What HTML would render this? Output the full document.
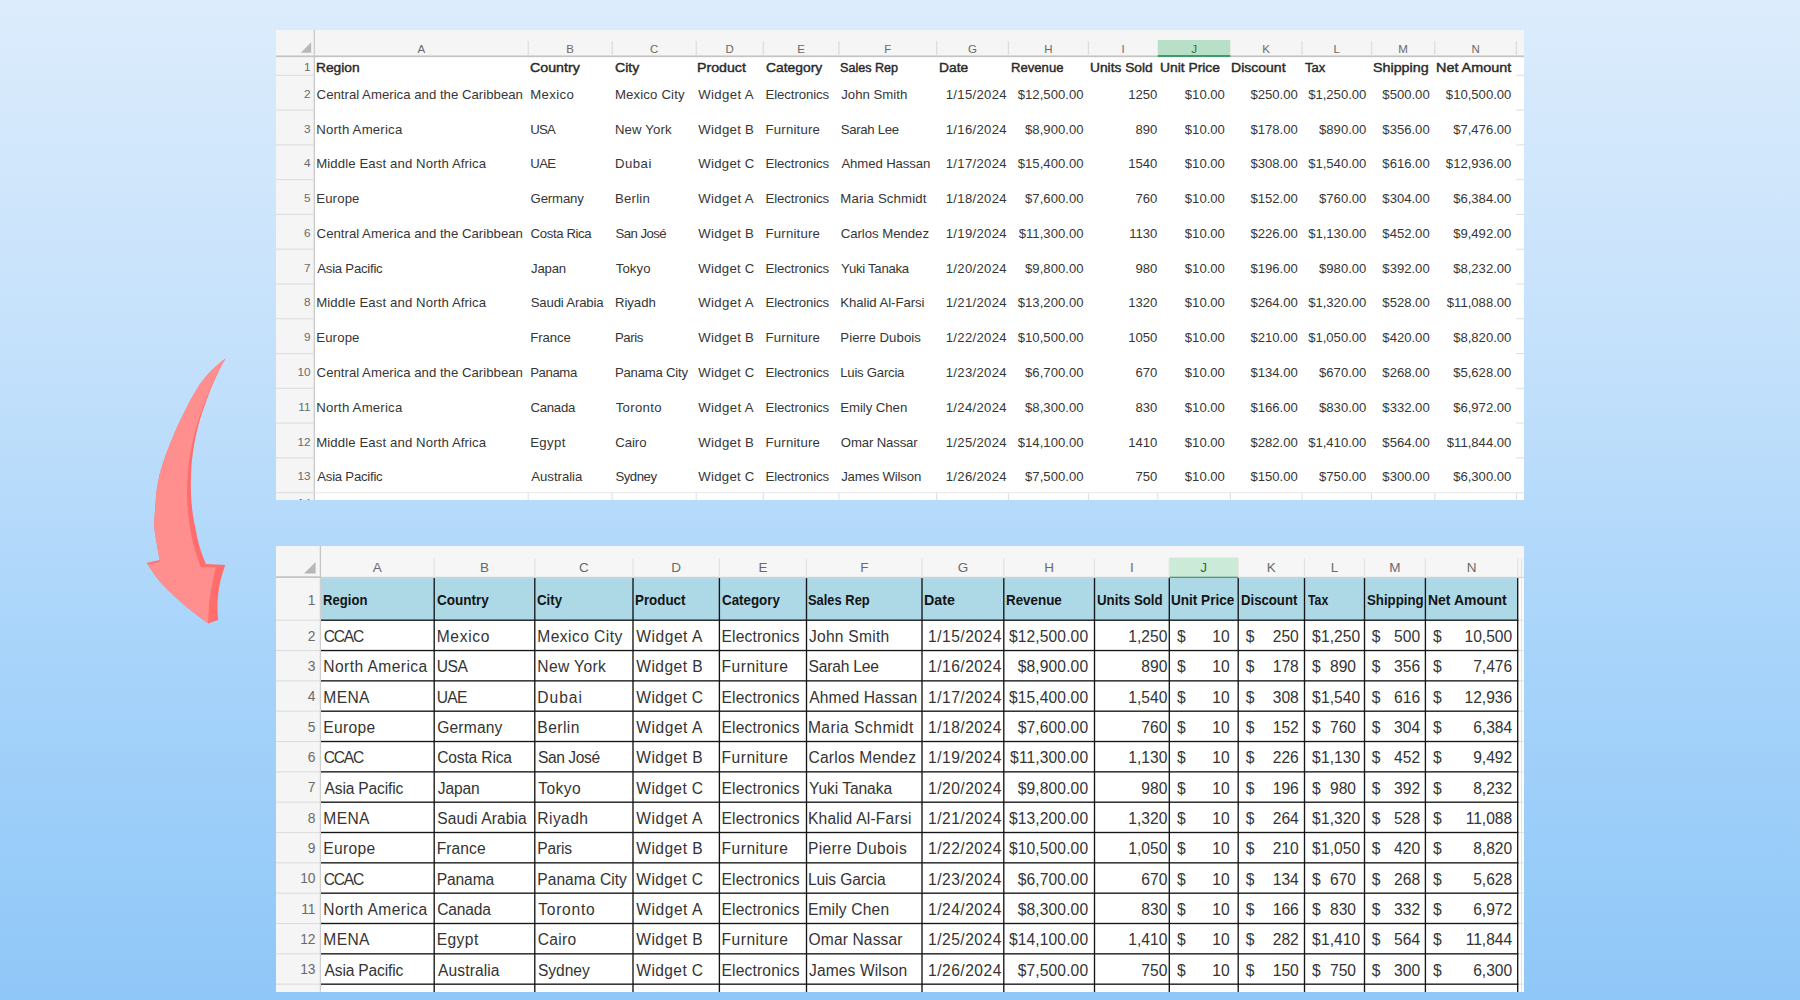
<!DOCTYPE html>
<html lang="en"><head><meta charset="utf-8"><title>Excel data cleanup: before and after</title>
<style>
html,body{margin:0;padding:0}
body{width:1800px;height:1000px;overflow:hidden;position:relative;font-family:"Liberation Sans",sans-serif;
background:linear-gradient(180deg,#dcecfc 0%,#c4e1fb 35%,#a8d4fa 65%,#8fc7f8 100%);}
.p{position:absolute;overflow:hidden;background:#fff}
.a{position:absolute;white-space:nowrap}
.l{position:absolute;background:#d4d4d4}
.c{position:absolute;white-space:nowrap;transform-origin:0 50%}
.r{text-align:right}
.rn{position:absolute;text-align:right;color:#6a6a6a;white-space:nowrap}
.cn{position:absolute;text-align:center;color:#6a6a6a;white-space:nowrap}
#t1 .c{font-size:13.2px;color:#363636;height:20px;line-height:20px}
#t1 .h{font-weight:400;color:#2a2a2a;font-size:13.3px;-webkit-text-stroke:0.42px #2a2a2a}
#t1 .n{font-size:13.1px}
#t2 .c{font-size:15.6px;color:#343434;height:24px;line-height:24px}
#t2 .h{font-weight:700;color:#141414;font-size:13.8px}
#t2 .n{font-size:15.6px}
</style></head><body>

<svg class="a" style="left:130px;top:345px" width="110" height="290" viewBox="130 345 110 290">
<path d="M225.4 358.4 C224.4 360.3 221.6 365.2 219.4 369.8 C217.2 374.4 214.4 380.3 212.0 386.0 C209.6 391.7 207.3 398.0 205.2 404.0 C203.1 410.0 200.9 416.0 199.2 422.0 C197.5 428.0 196.2 434.0 195.0 440.0 C193.8 446.0 192.9 452.0 192.2 458.0 C191.5 464.0 191.2 470.0 191.0 476.0 C190.8 482.0 190.8 488.0 191.0 494.0 C191.2 500.0 191.7 506.0 192.5 512.0 C193.3 518.0 194.8 525.0 195.8 530.0 C196.8 535.0 197.3 538.0 198.3 542.0 C199.3 546.0 200.7 550.3 202.0 554.0 C203.3 557.7 205.3 562.3 206.0 564.0 L225.3 565.1 C224.5 567.9 221.6 575.6 220.3 581.6 C219.0 587.6 218.0 595.0 217.6 601.4 C217.2 607.8 218.0 617.0 218.1 620.1 L208.2 623.4 C204.2 620.3 191.7 611.3 184.0 604.7 C176.3 598.1 168.2 590.8 162.0 583.8 C155.8 576.8 149.2 566.4 146.6 562.9 L159.8 560.0 C159.2 557.0 157.4 547.5 156.5 542.0 C155.6 536.5 154.6 532.6 154.4 527.0 C154.2 521.4 154.7 515.0 155.2 508.3 C155.7 501.6 156.0 493.9 157.2 486.7 C158.4 479.5 160.1 472.3 162.3 465.1 C164.5 457.9 167.3 450.7 170.2 443.5 C173.1 436.3 176.3 428.8 179.5 421.9 C182.7 415.0 186.0 408.5 189.4 402.2 C192.8 395.9 196.2 389.6 200.0 384.2 C203.8 378.8 208.0 374.1 212.2 369.8 C216.4 365.5 223.2 360.3 225.4 358.4 Z" fill="#ff6d6d"/>
<path d="M225.4 358.4 C224.3 360.4 221.3 365.8 218.9 370.5 C216.5 375.2 213.7 380.8 211.2 386.5 C208.7 392.2 206.3 398.6 204.1 404.5 C201.9 410.4 199.7 416.1 197.8 422.0 C196.0 427.9 194.4 434.0 193.0 440.0 C191.6 446.0 190.4 452.0 189.5 458.0 C188.6 464.0 188.0 470.0 187.6 476.0 C187.2 482.0 186.9 488.0 187.0 494.0 C187.1 500.0 187.4 506.0 188.0 512.0 C188.6 518.0 189.6 525.0 190.4 530.0 C191.2 535.0 191.8 537.8 192.8 542.0 C193.8 546.2 195.1 550.8 196.5 555.0 C197.9 559.2 200.2 565.2 201.0 567.3 L215.9 567.3 C215.3 569.7 213.7 575.7 212.6 581.6 C211.5 587.5 210.0 595.5 209.3 602.5 C208.6 609.5 208.4 619.9 208.2 623.4 C204.2 620.3 191.7 611.3 184.0 604.7 C176.3 598.1 168.1 590.5 162.0 583.8 C155.9 577.0 150.0 567.5 147.6 564.2 L159.9 561.8 C159.3 558.5 157.4 547.8 156.5 542.0 C155.6 536.2 154.6 532.6 154.4 527.0 C154.2 521.4 154.7 515.0 155.2 508.3 C155.7 501.6 156.0 493.9 157.2 486.7 C158.4 479.5 160.1 472.3 162.3 465.1 C164.5 457.9 167.3 450.7 170.2 443.5 C173.1 436.3 176.3 428.8 179.5 421.9 C182.7 415.0 186.0 408.5 189.4 402.2 C192.8 395.9 196.2 389.6 200.0 384.2 C203.8 378.8 208.0 374.1 212.2 369.8 C216.4 365.5 223.2 360.3 225.4 358.4 Z" fill="#ff8e8e"/>
</svg>
<div id="t1" class="p" style="left:276px;top:30px;width:1248px;height:470px">
<div class="a" style="left:0;top:0;width:1248px;height:26px;background:#f5f5f5"></div>
<div class="a" style="left:0;top:0;width:38px;height:470px;background:#f5f5f5"></div>
<svg class="a" style="left:0;top:0" width="1248" height="470" viewBox="0 0 1248 470">
<rect x="881.80" y="10" width="72.50" height="16" fill="#b8dfc7"/>
<rect x="0.00" y="25.45" width="1248.00" height="1.70" fill="#c4c4c4"/>
<rect x="881.80" y="25.00" width="72.50" height="2.00" fill="#3f9b68"/>
<rect x="37.70" y="0.00" width="1.20" height="470.00" fill="#c6c6c6"/>
<rect x="251.60" y="11.00" width="1.20" height="14.50" fill="#dcdcdc"/>
<rect x="335.60" y="11.00" width="1.20" height="14.50" fill="#dcdcdc"/>
<rect x="419.60" y="11.00" width="1.20" height="14.50" fill="#dcdcdc"/>
<rect x="486.70" y="11.00" width="1.20" height="14.50" fill="#dcdcdc"/>
<rect x="562.30" y="11.00" width="1.20" height="14.50" fill="#dcdcdc"/>
<rect x="660.10" y="11.00" width="1.20" height="14.50" fill="#dcdcdc"/>
<rect x="731.80" y="11.00" width="1.20" height="14.50" fill="#dcdcdc"/>
<rect x="811.80" y="11.00" width="1.20" height="14.50" fill="#dcdcdc"/>
<rect x="1025.40" y="11.00" width="1.20" height="14.50" fill="#dcdcdc"/>
<rect x="1094.90" y="11.00" width="1.20" height="14.50" fill="#dcdcdc"/>
<rect x="1158.20" y="11.00" width="1.20" height="14.50" fill="#dcdcdc"/>
<rect x="1239.80" y="11.00" width="1.20" height="14.50" fill="#dcdcdc"/>
<rect x="0.00" y="44.75" width="38.30" height="1.10" fill="#dddddd"/>
<rect x="1240.40" y="44.75" width="7.60" height="1.10" fill="#e0e0e0"/>
<rect x="0.00" y="79.53" width="38.30" height="1.10" fill="#dddddd"/>
<rect x="1240.40" y="79.53" width="7.60" height="1.10" fill="#e0e0e0"/>
<rect x="0.00" y="114.31" width="38.30" height="1.10" fill="#dddddd"/>
<rect x="1240.40" y="114.31" width="7.60" height="1.10" fill="#e0e0e0"/>
<rect x="0.00" y="149.09" width="38.30" height="1.10" fill="#dddddd"/>
<rect x="1240.40" y="149.09" width="7.60" height="1.10" fill="#e0e0e0"/>
<rect x="0.00" y="183.87" width="38.30" height="1.10" fill="#dddddd"/>
<rect x="1240.40" y="183.87" width="7.60" height="1.10" fill="#e0e0e0"/>
<rect x="0.00" y="218.65" width="38.30" height="1.10" fill="#dddddd"/>
<rect x="1240.40" y="218.65" width="7.60" height="1.10" fill="#e0e0e0"/>
<rect x="0.00" y="253.43" width="38.30" height="1.10" fill="#dddddd"/>
<rect x="1240.40" y="253.43" width="7.60" height="1.10" fill="#e0e0e0"/>
<rect x="0.00" y="288.21" width="38.30" height="1.10" fill="#dddddd"/>
<rect x="1240.40" y="288.21" width="7.60" height="1.10" fill="#e0e0e0"/>
<rect x="0.00" y="322.99" width="38.30" height="1.10" fill="#dddddd"/>
<rect x="1240.40" y="322.99" width="7.60" height="1.10" fill="#e0e0e0"/>
<rect x="0.00" y="357.77" width="38.30" height="1.10" fill="#dddddd"/>
<rect x="1240.40" y="357.77" width="7.60" height="1.10" fill="#e0e0e0"/>
<rect x="0.00" y="392.55" width="38.30" height="1.10" fill="#dddddd"/>
<rect x="1240.40" y="392.55" width="7.60" height="1.10" fill="#e0e0e0"/>
<rect x="0.00" y="427.33" width="38.30" height="1.10" fill="#dddddd"/>
<rect x="1240.40" y="427.33" width="7.60" height="1.10" fill="#e0e0e0"/>
<rect x="0.00" y="462.11" width="38.30" height="1.10" fill="#dddddd"/>
<rect x="1240.40" y="462.11" width="7.60" height="1.10" fill="#e0e0e0"/>
<rect x="0.00" y="496.89" width="38.30" height="1.10" fill="#dddddd"/>
<rect x="1240.40" y="496.89" width="7.60" height="1.10" fill="#e0e0e0"/>
<rect x="251.65" y="462.66" width="1.10" height="7.34" fill="#e0e0e0"/>
<rect x="335.65" y="462.66" width="1.10" height="7.34" fill="#e0e0e0"/>
<rect x="419.65" y="462.66" width="1.10" height="7.34" fill="#e0e0e0"/>
<rect x="486.75" y="462.66" width="1.10" height="7.34" fill="#e0e0e0"/>
<rect x="562.35" y="462.66" width="1.10" height="7.34" fill="#e0e0e0"/>
<rect x="660.15" y="462.66" width="1.10" height="7.34" fill="#e0e0e0"/>
<rect x="731.85" y="462.66" width="1.10" height="7.34" fill="#e0e0e0"/>
<rect x="811.85" y="462.66" width="1.10" height="7.34" fill="#e0e0e0"/>
<rect x="881.25" y="462.66" width="1.10" height="7.34" fill="#e0e0e0"/>
<rect x="953.75" y="462.66" width="1.10" height="7.34" fill="#e0e0e0"/>
<rect x="1025.45" y="462.66" width="1.10" height="7.34" fill="#e0e0e0"/>
<rect x="1094.95" y="462.66" width="1.10" height="7.34" fill="#e0e0e0"/>
<rect x="1158.25" y="462.66" width="1.10" height="7.34" fill="#e0e0e0"/>
<rect x="1239.85" y="462.66" width="1.10" height="7.34" fill="#e0e0e0"/>
<rect x="38.30" y="462.11" width="1209.70" height="1.10" fill="#e9e9e9"/>
<path d="M35.19999999999999 12.299999999999997 L35.19999999999999 22.799999999999997 L24.80000000000001 22.799999999999997 Z" fill="#b7b7b7"/>
</svg>
<div class="cn" style="left:38.3px;width:213.9px;top:11.5px;height:15px;line-height:15px;font-size:11.5px;color:#6a6a6a">A</div>
<div class="cn" style="left:252.2px;width:84.0px;top:11.5px;height:15px;line-height:15px;font-size:11.5px;color:#6a6a6a">B</div>
<div class="cn" style="left:336.2px;width:84.0px;top:11.5px;height:15px;line-height:15px;font-size:11.5px;color:#6a6a6a">C</div>
<div class="cn" style="left:420.2px;width:67.1px;top:11.5px;height:15px;line-height:15px;font-size:11.5px;color:#6a6a6a">D</div>
<div class="cn" style="left:487.3px;width:75.6px;top:11.5px;height:15px;line-height:15px;font-size:11.5px;color:#6a6a6a">E</div>
<div class="cn" style="left:562.9px;width:97.8px;top:11.5px;height:15px;line-height:15px;font-size:11.5px;color:#6a6a6a">F</div>
<div class="cn" style="left:660.7px;width:71.7px;top:11.5px;height:15px;line-height:15px;font-size:11.5px;color:#6a6a6a">G</div>
<div class="cn" style="left:732.4px;width:80.0px;top:11.5px;height:15px;line-height:15px;font-size:11.5px;color:#6a6a6a">H</div>
<div class="cn" style="left:812.4px;width:69.4px;top:11.5px;height:15px;line-height:15px;font-size:11.5px;color:#6a6a6a">I</div>
<div class="cn" style="left:881.8px;width:72.5px;top:11.5px;height:15px;line-height:15px;font-size:11.5px;color:#217346">J</div>
<div class="cn" style="left:954.3px;width:71.7px;top:11.5px;height:15px;line-height:15px;font-size:11.5px;color:#6a6a6a">K</div>
<div class="cn" style="left:1026.0px;width:69.5px;top:11.5px;height:15px;line-height:15px;font-size:11.5px;color:#6a6a6a">L</div>
<div class="cn" style="left:1095.5px;width:63.3px;top:11.5px;height:15px;line-height:15px;font-size:11.5px;color:#6a6a6a">M</div>
<div class="cn" style="left:1158.8px;width:81.6px;top:11.5px;height:15px;line-height:15px;font-size:11.5px;color:#6a6a6a">N</div>
<div class="rn" style="left:0;width:34.60000000000002px;top:27.4px;height:20px;line-height:20px;font-size:11.8px">1</div>
<div class="rn" style="left:0;width:34.60000000000002px;top:53.7px;height:20px;line-height:20px;font-size:11.8px">2</div>
<div class="rn" style="left:0;width:34.60000000000002px;top:88.5px;height:20px;line-height:20px;font-size:11.8px">3</div>
<div class="rn" style="left:0;width:34.60000000000002px;top:123.2px;height:20px;line-height:20px;font-size:11.8px">4</div>
<div class="rn" style="left:0;width:34.60000000000002px;top:158.0px;height:20px;line-height:20px;font-size:11.8px">5</div>
<div class="rn" style="left:0;width:34.60000000000002px;top:192.8px;height:20px;line-height:20px;font-size:11.8px">6</div>
<div class="rn" style="left:0;width:34.60000000000002px;top:227.6px;height:20px;line-height:20px;font-size:11.8px">7</div>
<div class="rn" style="left:0;width:34.60000000000002px;top:262.4px;height:20px;line-height:20px;font-size:11.8px">8</div>
<div class="rn" style="left:0;width:34.60000000000002px;top:297.1px;height:20px;line-height:20px;font-size:11.8px">9</div>
<div class="rn" style="left:0;width:34.60000000000002px;top:331.9px;height:20px;line-height:20px;font-size:11.8px">10</div>
<div class="rn" style="left:0;width:34.60000000000002px;top:366.7px;height:20px;line-height:20px;font-size:11.8px">11</div>
<div class="rn" style="left:0;width:34.60000000000002px;top:401.5px;height:20px;line-height:20px;font-size:11.8px">12</div>
<div class="rn" style="left:0;width:34.60000000000002px;top:436.3px;height:20px;line-height:20px;font-size:11.8px">13</div>
<div class="rn" style="left:0;width:34.60000000000002px;top:463.2px;height:20px;line-height:20px;font-size:11.8px">14</div>
<div class="c h" style="left:39.77px;top:27.6px;transform:scaleX(1.0353)">Region</div>
<div class="c h" style="left:254.18px;top:27.6px;transform:scaleX(1.0685)">Country</div>
<div class="c h" style="left:338.88px;top:27.6px;transform:scaleX(1.0586)">City</div>
<div class="c h" style="left:420.84px;top:27.6px;transform:scaleX(1.0664)">Product</div>
<div class="c h" style="left:489.60px;top:27.6px;transform:scaleX(1.0422)">Category</div>
<div class="c h" style="left:564.43px;top:27.6px;transform:scaleX(0.9471)">Sales Rep</div>
<div class="c h" style="left:663.07px;top:27.6px;transform:scaleX(1.0377)">Date</div>
<div class="c h" style="left:734.52px;top:27.6px;transform:scaleX(0.9856)">Revenue</div>
<div class="c h" style="left:813.84px;top:27.6px;transform:scaleX(1.0354)">Units Sold</div>
<div class="c h" style="left:884.23px;top:27.6px;transform:scaleX(1.0407)">Unit Price</div>
<div class="c h" style="left:955.25px;top:27.6px;transform:scaleX(1.0545)">Discount</div>
<div class="c h" style="left:1029.01px;top:27.6px;transform:scaleX(0.9827)">Tax</div>
<div class="c h" style="left:1097.35px;top:27.6px;transform:scaleX(1.0737)">Shipping</div>
<div class="c h" style="left:1160.42px;top:27.6px;transform:scaleX(1.0823)">Net Amount</div>
<div class="c" style="left:40.6px;top:54.7px;letter-spacing:0.010px">Central America and the Caribbean</div>
<div class="c" style="left:254.2px;top:54.7px;letter-spacing:0.373px">Mexico</div>
<div class="c" style="left:338.9px;top:54.7px;letter-spacing:0.156px">Mexico City</div>
<div class="c" style="left:422.3px;top:54.7px;letter-spacing:0.340px">Widget A</div>
<div class="c" style="left:489.6px;top:54.7px;letter-spacing:-0.104px">Electronics</div>
<div class="c" style="left:565.2px;top:54.7px;letter-spacing:0.010px">John Smith</div>
<div class="c r n" style="left:530.9px;width:200px;top:54.7px;letter-spacing:0.32px">1/15/2024</div>
<div class="c r n" style="left:607.7px;width:200px;top:54.7px;letter-spacing:0.05px">$12,500.00</div>
<div class="c r n" style="left:681.3px;width:200px;top:54.7px;letter-spacing:0px">1250</div>
<div class="c r n" style="left:748.9px;width:200px;top:54.7px;letter-spacing:0px">$10.00</div>
<div class="c r n" style="left:821.8px;width:200px;top:54.7px;letter-spacing:0px">$250.00</div>
<div class="c r n" style="left:890.4px;width:200px;top:54.7px;letter-spacing:0px">$1,250.00</div>
<div class="c r n" style="left:953.7px;width:200px;top:54.7px;letter-spacing:0px">$500.00</div>
<div class="c r n" style="left:1035.4px;width:200px;top:54.7px;letter-spacing:0px">$10,500.00</div>
<div class="c" style="left:40.2px;top:89.5px;letter-spacing:0.209px">North America</div>
<div class="c" style="left:254.3px;top:89.5px;letter-spacing:-0.786px">USA</div>
<div class="c" style="left:338.9px;top:89.5px;letter-spacing:0.131px">New York</div>
<div class="c" style="left:422.3px;top:89.5px;letter-spacing:0.293px">Widget B</div>
<div class="c" style="left:489.6px;top:89.5px;letter-spacing:0.188px">Furniture</div>
<div class="c" style="left:564.8px;top:89.5px;letter-spacing:-0.334px">Sarah Lee</div>
<div class="c r n" style="left:530.9px;width:200px;top:89.5px;letter-spacing:0.32px">1/16/2024</div>
<div class="c r n" style="left:607.7px;width:200px;top:89.5px;letter-spacing:0.05px">$8,900.00</div>
<div class="c r n" style="left:681.3px;width:200px;top:89.5px;letter-spacing:0px">890</div>
<div class="c r n" style="left:748.9px;width:200px;top:89.5px;letter-spacing:0px">$10.00</div>
<div class="c r n" style="left:821.8px;width:200px;top:89.5px;letter-spacing:0px">$178.00</div>
<div class="c r n" style="left:890.4px;width:200px;top:89.5px;letter-spacing:0px">$890.00</div>
<div class="c r n" style="left:953.7px;width:200px;top:89.5px;letter-spacing:0px">$356.00</div>
<div class="c r n" style="left:1035.4px;width:200px;top:89.5px;letter-spacing:0px">$7,476.00</div>
<div class="c" style="left:40.2px;top:124.2px;letter-spacing:0.105px">Middle East and North Africa</div>
<div class="c" style="left:254.3px;top:124.2px;letter-spacing:-0.665px">UAE</div>
<div class="c" style="left:338.9px;top:124.2px;letter-spacing:0.504px">Dubai</div>
<div class="c" style="left:422.3px;top:124.2px;letter-spacing:0.261px">Widget C</div>
<div class="c" style="left:489.6px;top:124.2px;letter-spacing:-0.104px">Electronics</div>
<div class="c" style="left:565.4px;top:124.2px;letter-spacing:-0.116px">Ahmed Hassan</div>
<div class="c r n" style="left:530.9px;width:200px;top:124.2px;letter-spacing:0.32px">1/17/2024</div>
<div class="c r n" style="left:607.7px;width:200px;top:124.2px;letter-spacing:0.05px">$15,400.00</div>
<div class="c r n" style="left:681.3px;width:200px;top:124.2px;letter-spacing:0px">1540</div>
<div class="c r n" style="left:748.9px;width:200px;top:124.2px;letter-spacing:0px">$10.00</div>
<div class="c r n" style="left:821.8px;width:200px;top:124.2px;letter-spacing:0px">$308.00</div>
<div class="c r n" style="left:890.4px;width:200px;top:124.2px;letter-spacing:0px">$1,540.00</div>
<div class="c r n" style="left:953.7px;width:200px;top:124.2px;letter-spacing:0px">$616.00</div>
<div class="c r n" style="left:1035.4px;width:200px;top:124.2px;letter-spacing:0px">$12,936.00</div>
<div class="c" style="left:40.2px;top:159.0px;letter-spacing:0.149px">Europe</div>
<div class="c" style="left:254.6px;top:159.0px;letter-spacing:-0.157px">Germany</div>
<div class="c" style="left:338.9px;top:159.0px;letter-spacing:0.245px">Berlin</div>
<div class="c" style="left:422.3px;top:159.0px;letter-spacing:0.340px">Widget A</div>
<div class="c" style="left:489.6px;top:159.0px;letter-spacing:-0.104px">Electronics</div>
<div class="c" style="left:564.3px;top:159.0px;letter-spacing:0.159px">Maria Schmidt</div>
<div class="c r n" style="left:530.9px;width:200px;top:159.0px;letter-spacing:0.32px">1/18/2024</div>
<div class="c r n" style="left:607.7px;width:200px;top:159.0px;letter-spacing:0.05px">$7,600.00</div>
<div class="c r n" style="left:681.3px;width:200px;top:159.0px;letter-spacing:0px">760</div>
<div class="c r n" style="left:748.9px;width:200px;top:159.0px;letter-spacing:0px">$10.00</div>
<div class="c r n" style="left:821.8px;width:200px;top:159.0px;letter-spacing:0px">$152.00</div>
<div class="c r n" style="left:890.4px;width:200px;top:159.0px;letter-spacing:0px">$760.00</div>
<div class="c r n" style="left:953.7px;width:200px;top:159.0px;letter-spacing:0px">$304.00</div>
<div class="c r n" style="left:1035.4px;width:200px;top:159.0px;letter-spacing:0px">$6,384.00</div>
<div class="c" style="left:40.6px;top:193.8px;letter-spacing:0.010px">Central America and the Caribbean</div>
<div class="c" style="left:254.6px;top:193.8px;letter-spacing:-0.381px">Costa Rica</div>
<div class="c" style="left:339.4px;top:193.8px;letter-spacing:-0.528px">San José</div>
<div class="c" style="left:422.3px;top:193.8px;letter-spacing:0.293px">Widget B</div>
<div class="c" style="left:489.6px;top:193.8px;letter-spacing:0.188px">Furniture</div>
<div class="c" style="left:564.7px;top:193.8px;letter-spacing:-0.030px">Carlos Mendez</div>
<div class="c r n" style="left:530.9px;width:200px;top:193.8px;letter-spacing:0.32px">1/19/2024</div>
<div class="c r n" style="left:607.7px;width:200px;top:193.8px;letter-spacing:0.05px">$11,300.00</div>
<div class="c r n" style="left:681.3px;width:200px;top:193.8px;letter-spacing:0px">1130</div>
<div class="c r n" style="left:748.9px;width:200px;top:193.8px;letter-spacing:0px">$10.00</div>
<div class="c r n" style="left:821.8px;width:200px;top:193.8px;letter-spacing:0px">$226.00</div>
<div class="c r n" style="left:890.4px;width:200px;top:193.8px;letter-spacing:0px">$1,130.00</div>
<div class="c r n" style="left:953.7px;width:200px;top:193.8px;letter-spacing:0px">$452.00</div>
<div class="c r n" style="left:1035.4px;width:200px;top:193.8px;letter-spacing:0px">$9,492.00</div>
<div class="c" style="left:41.3px;top:228.6px;letter-spacing:-0.253px">Asia Pacific</div>
<div class="c" style="left:255.1px;top:228.6px;letter-spacing:-0.217px">Japan</div>
<div class="c" style="left:339.7px;top:228.6px;letter-spacing:0.101px">Tokyo</div>
<div class="c" style="left:422.3px;top:228.6px;letter-spacing:0.261px">Widget C</div>
<div class="c" style="left:489.6px;top:228.6px;letter-spacing:-0.104px">Electronics</div>
<div class="c" style="left:565.1px;top:228.6px;letter-spacing:-0.282px">Yuki Tanaka</div>
<div class="c r n" style="left:530.9px;width:200px;top:228.6px;letter-spacing:0.32px">1/20/2024</div>
<div class="c r n" style="left:607.7px;width:200px;top:228.6px;letter-spacing:0.05px">$9,800.00</div>
<div class="c r n" style="left:681.3px;width:200px;top:228.6px;letter-spacing:0px">980</div>
<div class="c r n" style="left:748.9px;width:200px;top:228.6px;letter-spacing:0px">$10.00</div>
<div class="c r n" style="left:821.8px;width:200px;top:228.6px;letter-spacing:0px">$196.00</div>
<div class="c r n" style="left:890.4px;width:200px;top:228.6px;letter-spacing:0px">$980.00</div>
<div class="c r n" style="left:953.7px;width:200px;top:228.6px;letter-spacing:0px">$392.00</div>
<div class="c r n" style="left:1035.4px;width:200px;top:228.6px;letter-spacing:0px">$8,232.00</div>
<div class="c" style="left:40.2px;top:263.4px;letter-spacing:0.105px">Middle East and North Africa</div>
<div class="c" style="left:254.7px;top:263.4px;letter-spacing:-0.174px">Saudi Arabia</div>
<div class="c" style="left:338.9px;top:263.4px;letter-spacing:-0.022px">Riyadh</div>
<div class="c" style="left:422.3px;top:263.4px;letter-spacing:0.340px">Widget A</div>
<div class="c" style="left:489.6px;top:263.4px;letter-spacing:-0.104px">Electronics</div>
<div class="c" style="left:564.3px;top:263.4px;letter-spacing:-0.055px">Khalid Al-Farsi</div>
<div class="c r n" style="left:530.9px;width:200px;top:263.4px;letter-spacing:0.32px">1/21/2024</div>
<div class="c r n" style="left:607.7px;width:200px;top:263.4px;letter-spacing:0.05px">$13,200.00</div>
<div class="c r n" style="left:681.3px;width:200px;top:263.4px;letter-spacing:0px">1320</div>
<div class="c r n" style="left:748.9px;width:200px;top:263.4px;letter-spacing:0px">$10.00</div>
<div class="c r n" style="left:821.8px;width:200px;top:263.4px;letter-spacing:0px">$264.00</div>
<div class="c r n" style="left:890.4px;width:200px;top:263.4px;letter-spacing:0px">$1,320.00</div>
<div class="c r n" style="left:953.7px;width:200px;top:263.4px;letter-spacing:0px">$528.00</div>
<div class="c r n" style="left:1035.4px;width:200px;top:263.4px;letter-spacing:0px">$11,088.00</div>
<div class="c" style="left:40.2px;top:298.1px;letter-spacing:0.149px">Europe</div>
<div class="c" style="left:254.2px;top:298.1px;letter-spacing:-0.075px">France</div>
<div class="c" style="left:338.9px;top:298.1px;letter-spacing:-0.371px">Paris</div>
<div class="c" style="left:422.3px;top:298.1px;letter-spacing:0.293px">Widget B</div>
<div class="c" style="left:489.6px;top:298.1px;letter-spacing:0.188px">Furniture</div>
<div class="c" style="left:564.3px;top:298.1px;letter-spacing:0.056px">Pierre Dubois</div>
<div class="c r n" style="left:530.9px;width:200px;top:298.1px;letter-spacing:0.32px">1/22/2024</div>
<div class="c r n" style="left:607.7px;width:200px;top:298.1px;letter-spacing:0.05px">$10,500.00</div>
<div class="c r n" style="left:681.3px;width:200px;top:298.1px;letter-spacing:0px">1050</div>
<div class="c r n" style="left:748.9px;width:200px;top:298.1px;letter-spacing:0px">$10.00</div>
<div class="c r n" style="left:821.8px;width:200px;top:298.1px;letter-spacing:0px">$210.00</div>
<div class="c r n" style="left:890.4px;width:200px;top:298.1px;letter-spacing:0px">$1,050.00</div>
<div class="c r n" style="left:953.7px;width:200px;top:298.1px;letter-spacing:0px">$420.00</div>
<div class="c r n" style="left:1035.4px;width:200px;top:298.1px;letter-spacing:0px">$8,820.00</div>
<div class="c" style="left:40.6px;top:332.9px;letter-spacing:0.010px">Central America and the Caribbean</div>
<div class="c" style="left:254.2px;top:332.9px;letter-spacing:-0.407px">Panama</div>
<div class="c" style="left:338.9px;top:332.9px;letter-spacing:-0.238px">Panama City</div>
<div class="c" style="left:422.3px;top:332.9px;letter-spacing:0.261px">Widget C</div>
<div class="c" style="left:489.6px;top:332.9px;letter-spacing:-0.104px">Electronics</div>
<div class="c" style="left:564.3px;top:332.9px;letter-spacing:-0.261px">Luis Garcia</div>
<div class="c r n" style="left:530.9px;width:200px;top:332.9px;letter-spacing:0.32px">1/23/2024</div>
<div class="c r n" style="left:607.7px;width:200px;top:332.9px;letter-spacing:0.05px">$6,700.00</div>
<div class="c r n" style="left:681.3px;width:200px;top:332.9px;letter-spacing:0px">670</div>
<div class="c r n" style="left:748.9px;width:200px;top:332.9px;letter-spacing:0px">$10.00</div>
<div class="c r n" style="left:821.8px;width:200px;top:332.9px;letter-spacing:0px">$134.00</div>
<div class="c r n" style="left:890.4px;width:200px;top:332.9px;letter-spacing:0px">$670.00</div>
<div class="c r n" style="left:953.7px;width:200px;top:332.9px;letter-spacing:0px">$268.00</div>
<div class="c r n" style="left:1035.4px;width:200px;top:332.9px;letter-spacing:0px">$5,628.00</div>
<div class="c" style="left:40.2px;top:367.7px;letter-spacing:0.209px">North America</div>
<div class="c" style="left:254.6px;top:367.7px;letter-spacing:-0.305px">Canada</div>
<div class="c" style="left:339.7px;top:367.7px;letter-spacing:0.311px">Toronto</div>
<div class="c" style="left:422.3px;top:367.7px;letter-spacing:0.340px">Widget A</div>
<div class="c" style="left:489.6px;top:367.7px;letter-spacing:-0.104px">Electronics</div>
<div class="c" style="left:564.3px;top:367.7px;letter-spacing:-0.054px">Emily Chen</div>
<div class="c r n" style="left:530.9px;width:200px;top:367.7px;letter-spacing:0.32px">1/24/2024</div>
<div class="c r n" style="left:607.7px;width:200px;top:367.7px;letter-spacing:0.05px">$8,300.00</div>
<div class="c r n" style="left:681.3px;width:200px;top:367.7px;letter-spacing:0px">830</div>
<div class="c r n" style="left:748.9px;width:200px;top:367.7px;letter-spacing:0px">$10.00</div>
<div class="c r n" style="left:821.8px;width:200px;top:367.7px;letter-spacing:0px">$166.00</div>
<div class="c r n" style="left:890.4px;width:200px;top:367.7px;letter-spacing:0px">$830.00</div>
<div class="c r n" style="left:953.7px;width:200px;top:367.7px;letter-spacing:0px">$332.00</div>
<div class="c r n" style="left:1035.4px;width:200px;top:367.7px;letter-spacing:0px">$6,972.00</div>
<div class="c" style="left:40.2px;top:402.5px;letter-spacing:0.105px">Middle East and North Africa</div>
<div class="c" style="left:254.2px;top:402.5px;letter-spacing:0.364px">Egypt</div>
<div class="c" style="left:339.3px;top:402.5px;letter-spacing:-0.072px">Cairo</div>
<div class="c" style="left:422.3px;top:402.5px;letter-spacing:0.293px">Widget B</div>
<div class="c" style="left:489.6px;top:402.5px;letter-spacing:0.188px">Furniture</div>
<div class="c" style="left:564.8px;top:402.5px;letter-spacing:-0.156px">Omar Nassar</div>
<div class="c r n" style="left:530.9px;width:200px;top:402.5px;letter-spacing:0.32px">1/25/2024</div>
<div class="c r n" style="left:607.7px;width:200px;top:402.5px;letter-spacing:0.05px">$14,100.00</div>
<div class="c r n" style="left:681.3px;width:200px;top:402.5px;letter-spacing:0px">1410</div>
<div class="c r n" style="left:748.9px;width:200px;top:402.5px;letter-spacing:0px">$10.00</div>
<div class="c r n" style="left:821.8px;width:200px;top:402.5px;letter-spacing:0px">$282.00</div>
<div class="c r n" style="left:890.4px;width:200px;top:402.5px;letter-spacing:0px">$1,410.00</div>
<div class="c r n" style="left:953.7px;width:200px;top:402.5px;letter-spacing:0px">$564.00</div>
<div class="c r n" style="left:1035.4px;width:200px;top:402.5px;letter-spacing:0px">$11,844.00</div>
<div class="c" style="left:41.3px;top:437.3px;letter-spacing:-0.253px">Asia Pacific</div>
<div class="c" style="left:255.3px;top:437.3px;letter-spacing:-0.035px">Australia</div>
<div class="c" style="left:339.4px;top:437.3px;letter-spacing:-0.472px">Sydney</div>
<div class="c" style="left:422.3px;top:437.3px;letter-spacing:0.261px">Widget C</div>
<div class="c" style="left:489.6px;top:437.3px;letter-spacing:-0.104px">Electronics</div>
<div class="c" style="left:565.2px;top:437.3px;letter-spacing:-0.183px">James Wilson</div>
<div class="c r n" style="left:530.9px;width:200px;top:437.3px;letter-spacing:0.32px">1/26/2024</div>
<div class="c r n" style="left:607.7px;width:200px;top:437.3px;letter-spacing:0.05px">$7,500.00</div>
<div class="c r n" style="left:681.3px;width:200px;top:437.3px;letter-spacing:0px">750</div>
<div class="c r n" style="left:748.9px;width:200px;top:437.3px;letter-spacing:0px">$10.00</div>
<div class="c r n" style="left:821.8px;width:200px;top:437.3px;letter-spacing:0px">$150.00</div>
<div class="c r n" style="left:890.4px;width:200px;top:437.3px;letter-spacing:0px">$750.00</div>
<div class="c r n" style="left:953.7px;width:200px;top:437.3px;letter-spacing:0px">$300.00</div>
<div class="c r n" style="left:1035.4px;width:200px;top:437.3px;letter-spacing:0px">$6,300.00</div>
</div>

<div id="t2" class="p" style="left:276px;top:545.5px;width:1248px;height:446px">
<div class="a" style="left:0;top:0;width:1248px;height:32.5px;background:#f6f6f6"></div>
<div class="a" style="left:0;top:0;width:44px;height:446px;background:#f5f5f5"></div>
<svg class="a" style="left:0;top:0" width="1248" height="446" viewBox="0 0 1248 446">
<rect x="893.30" y="11.5" width="68.90" height="20" fill="#cbead7"/>
<rect x="0.00" y="30.20" width="44.40" height="1.80" fill="#c6c6c6"/>
<rect x="44.40" y="30.80" width="1203.60" height="1.20" fill="#d0d0d0"/>
<rect x="893.30" y="30.70" width="68.90" height="1.60" fill="#4c9f74"/>
<rect x="43.75" y="0.00" width="1.30" height="32.10" fill="#c6c6c6"/>
<rect x="157.60" y="12.50" width="1.20" height="18.00" fill="#e2e2e2"/>
<rect x="258.20" y="12.50" width="1.20" height="18.00" fill="#e2e2e2"/>
<rect x="356.40" y="12.50" width="1.20" height="18.00" fill="#e2e2e2"/>
<rect x="442.80" y="12.50" width="1.20" height="18.00" fill="#e2e2e2"/>
<rect x="529.90" y="12.50" width="1.20" height="18.00" fill="#e2e2e2"/>
<rect x="645.40" y="12.50" width="1.20" height="18.00" fill="#e2e2e2"/>
<rect x="727.20" y="12.50" width="1.20" height="18.00" fill="#e2e2e2"/>
<rect x="817.90" y="12.50" width="1.20" height="18.00" fill="#e2e2e2"/>
<rect x="892.70" y="12.50" width="1.20" height="18.00" fill="#e2e2e2"/>
<rect x="961.60" y="12.50" width="1.20" height="18.00" fill="#e2e2e2"/>
<rect x="1027.90" y="12.50" width="1.20" height="18.00" fill="#e2e2e2"/>
<rect x="1087.90" y="12.50" width="1.20" height="18.00" fill="#e2e2e2"/>
<rect x="1148.80" y="12.50" width="1.20" height="18.00" fill="#e2e2e2"/>
<rect x="1241.10" y="12.50" width="1.20" height="18.00" fill="#e2e2e2"/>
<rect x="0.00" y="73.65" width="44.00" height="1.10" fill="#dddddd"/>
<rect x="1241.70" y="73.65" width="6.30" height="1.10" fill="#e0e0e0"/>
<rect x="0.00" y="103.98" width="44.00" height="1.10" fill="#dddddd"/>
<rect x="1241.70" y="103.98" width="6.30" height="1.10" fill="#e0e0e0"/>
<rect x="0.00" y="134.31" width="44.00" height="1.10" fill="#dddddd"/>
<rect x="1241.70" y="134.31" width="6.30" height="1.10" fill="#e0e0e0"/>
<rect x="0.00" y="164.64" width="44.00" height="1.10" fill="#dddddd"/>
<rect x="1241.70" y="164.64" width="6.30" height="1.10" fill="#e0e0e0"/>
<rect x="0.00" y="194.97" width="44.00" height="1.10" fill="#dddddd"/>
<rect x="1241.70" y="194.97" width="6.30" height="1.10" fill="#e0e0e0"/>
<rect x="0.00" y="225.30" width="44.00" height="1.10" fill="#dddddd"/>
<rect x="1241.70" y="225.30" width="6.30" height="1.10" fill="#e0e0e0"/>
<rect x="0.00" y="255.63" width="44.00" height="1.10" fill="#dddddd"/>
<rect x="1241.70" y="255.63" width="6.30" height="1.10" fill="#e0e0e0"/>
<rect x="0.00" y="285.96" width="44.00" height="1.10" fill="#dddddd"/>
<rect x="1241.70" y="285.96" width="6.30" height="1.10" fill="#e0e0e0"/>
<rect x="0.00" y="316.29" width="44.00" height="1.10" fill="#dddddd"/>
<rect x="1241.70" y="316.29" width="6.30" height="1.10" fill="#e0e0e0"/>
<rect x="0.00" y="346.62" width="44.00" height="1.10" fill="#dddddd"/>
<rect x="1241.70" y="346.62" width="6.30" height="1.10" fill="#e0e0e0"/>
<rect x="0.00" y="376.95" width="44.00" height="1.10" fill="#dddddd"/>
<rect x="1241.70" y="376.95" width="6.30" height="1.10" fill="#e0e0e0"/>
<rect x="0.00" y="407.28" width="44.00" height="1.10" fill="#dddddd"/>
<rect x="1241.70" y="407.28" width="6.30" height="1.10" fill="#e0e0e0"/>
<rect x="0.00" y="437.61" width="44.00" height="1.10" fill="#dddddd"/>
<rect x="1241.70" y="437.61" width="6.30" height="1.10" fill="#e0e0e0"/>
<rect x="0.00" y="467.94" width="44.00" height="1.10" fill="#dddddd"/>
<rect x="1241.70" y="467.94" width="6.30" height="1.10" fill="#e0e0e0"/>
<rect x="1244.95" y="12.50" width="1.10" height="433.50" fill="#e4e4e4"/>
<path d="M39.60000000000002 16.0 L39.60000000000002 27.5 L28 27.5 Z" fill="#b7b7b7"/>
<rect x="44.40" y="32.10" width="1197.30" height="42.10" fill="#add8e6"/>
<rect x="43.75" y="32.10" width="1.30" height="413.90" fill="#cfcfcf"/>
<rect x="157.52" y="32.10" width="1.35" height="413.90" fill="#161616"/>
<rect x="258.12" y="32.10" width="1.35" height="413.90" fill="#161616"/>
<rect x="356.32" y="32.10" width="1.35" height="413.90" fill="#161616"/>
<rect x="442.72" y="32.10" width="1.35" height="413.90" fill="#161616"/>
<rect x="529.83" y="32.10" width="1.35" height="413.90" fill="#161616"/>
<rect x="645.33" y="32.10" width="1.35" height="413.90" fill="#161616"/>
<rect x="727.12" y="32.10" width="1.35" height="413.90" fill="#161616"/>
<rect x="817.83" y="32.10" width="1.35" height="413.90" fill="#161616"/>
<rect x="892.62" y="32.10" width="1.35" height="413.90" fill="#161616"/>
<rect x="961.53" y="32.10" width="1.35" height="413.90" fill="#161616"/>
<rect x="1027.83" y="32.10" width="1.35" height="413.90" fill="#161616"/>
<rect x="1087.83" y="32.10" width="1.35" height="413.90" fill="#161616"/>
<rect x="1148.73" y="32.10" width="1.35" height="413.90" fill="#161616"/>
<rect x="1241.03" y="32.10" width="1.35" height="413.90" fill="#161616"/>
<rect x="45.00" y="73.53" width="1197.30" height="1.35" fill="#161616"/>
<rect x="45.00" y="103.86" width="1197.30" height="1.35" fill="#161616"/>
<rect x="45.00" y="134.19" width="1197.30" height="1.35" fill="#161616"/>
<rect x="45.00" y="164.52" width="1197.30" height="1.35" fill="#161616"/>
<rect x="45.00" y="194.84" width="1197.30" height="1.35" fill="#161616"/>
<rect x="45.00" y="225.18" width="1197.30" height="1.35" fill="#161616"/>
<rect x="45.00" y="255.51" width="1197.30" height="1.35" fill="#161616"/>
<rect x="45.00" y="285.83" width="1197.30" height="1.35" fill="#161616"/>
<rect x="45.00" y="316.17" width="1197.30" height="1.35" fill="#161616"/>
<rect x="45.00" y="346.50" width="1197.30" height="1.35" fill="#161616"/>
<rect x="45.00" y="376.82" width="1197.30" height="1.35" fill="#161616"/>
<rect x="45.00" y="407.16" width="1197.30" height="1.35" fill="#161616"/>
<rect x="45.00" y="437.49" width="1197.30" height="1.35" fill="#161616"/>
<rect x="45.00" y="467.81" width="1197.30" height="1.35" fill="#161616"/>
</svg>
<div class="cn" style="left:44.4px;width:113.8px;top:13.5px;height:18px;line-height:18px;font-size:13.5px;color:#6a6a6a">A</div>
<div class="cn" style="left:158.2px;width:100.6px;top:13.5px;height:18px;line-height:18px;font-size:13.5px;color:#6a6a6a">B</div>
<div class="cn" style="left:258.8px;width:98.2px;top:13.5px;height:18px;line-height:18px;font-size:13.5px;color:#6a6a6a">C</div>
<div class="cn" style="left:357.0px;width:86.4px;top:13.5px;height:18px;line-height:18px;font-size:13.5px;color:#6a6a6a">D</div>
<div class="cn" style="left:443.4px;width:87.1px;top:13.5px;height:18px;line-height:18px;font-size:13.5px;color:#6a6a6a">E</div>
<div class="cn" style="left:530.5px;width:115.5px;top:13.5px;height:18px;line-height:18px;font-size:13.5px;color:#6a6a6a">F</div>
<div class="cn" style="left:646.0px;width:81.8px;top:13.5px;height:18px;line-height:18px;font-size:13.5px;color:#6a6a6a">G</div>
<div class="cn" style="left:727.8px;width:90.7px;top:13.5px;height:18px;line-height:18px;font-size:13.5px;color:#6a6a6a">H</div>
<div class="cn" style="left:818.5px;width:74.8px;top:13.5px;height:18px;line-height:18px;font-size:13.5px;color:#6a6a6a">I</div>
<div class="cn" style="left:893.3px;width:68.9px;top:13.5px;height:18px;line-height:18px;font-size:13.5px;color:#217346">J</div>
<div class="cn" style="left:962.2px;width:66.3px;top:13.5px;height:18px;line-height:18px;font-size:13.5px;color:#6a6a6a">K</div>
<div class="cn" style="left:1028.5px;width:60.0px;top:13.5px;height:18px;line-height:18px;font-size:13.5px;color:#6a6a6a">L</div>
<div class="cn" style="left:1088.5px;width:60.9px;top:13.5px;height:18px;line-height:18px;font-size:13.5px;color:#6a6a6a">M</div>
<div class="cn" style="left:1149.4px;width:92.3px;top:13.5px;height:18px;line-height:18px;font-size:13.5px;color:#6a6a6a">N</div>
<div class="rn" style="left:0;width:39.5px;top:45.4px;height:20px;line-height:20px;font-size:13.8px">1</div>
<div class="rn" style="left:0;width:39.5px;top:81.2px;height:20px;line-height:20px;font-size:13.8px">2</div>
<div class="rn" style="left:0;width:39.5px;top:111.5px;height:20px;line-height:20px;font-size:13.8px">3</div>
<div class="rn" style="left:0;width:39.5px;top:141.8px;height:20px;line-height:20px;font-size:13.8px">4</div>
<div class="rn" style="left:0;width:39.5px;top:172.2px;height:20px;line-height:20px;font-size:13.8px">5</div>
<div class="rn" style="left:0;width:39.5px;top:202.5px;height:20px;line-height:20px;font-size:13.8px">6</div>
<div class="rn" style="left:0;width:39.5px;top:232.8px;height:20px;line-height:20px;font-size:13.8px">7</div>
<div class="rn" style="left:0;width:39.5px;top:263.1px;height:20px;line-height:20px;font-size:13.8px">8</div>
<div class="rn" style="left:0;width:39.5px;top:293.5px;height:20px;line-height:20px;font-size:13.8px">9</div>
<div class="rn" style="left:0;width:39.5px;top:323.8px;height:20px;line-height:20px;font-size:13.8px">10</div>
<div class="rn" style="left:0;width:39.5px;top:354.1px;height:20px;line-height:20px;font-size:13.8px">11</div>
<div class="rn" style="left:0;width:39.5px;top:384.5px;height:20px;line-height:20px;font-size:13.8px">12</div>
<div class="rn" style="left:0;width:39.5px;top:414.8px;height:20px;line-height:20px;font-size:13.8px">13</div>
<div class="c h" style="left:47.12px;top:43.2px;transform:scaleX(0.9494)">Region</div>
<div class="c h" style="left:160.85px;top:43.2px;transform:scaleX(0.9800)">Country</div>
<div class="c h" style="left:261.45px;top:43.2px;transform:scaleX(0.9636)">City</div>
<div class="c h" style="left:358.91px;top:43.2px;transform:scaleX(0.9680)">Product</div>
<div class="c h" style="left:445.65px;top:43.2px;transform:scaleX(0.9668)">Category</div>
<div class="c h" style="left:532.23px;top:43.2px;transform:scaleX(0.9355)">Sales Rep</div>
<div class="c h" style="left:647.94px;top:43.2px;transform:scaleX(1.0347)">Date</div>
<div class="c h" style="left:729.81px;top:43.2px;transform:scaleX(0.9694)">Revenue</div>
<div class="c h" style="left:820.50px;top:43.2px;transform:scaleX(0.9627)">Units Sold</div>
<div class="c h" style="left:895.49px;top:43.2px;transform:scaleX(0.9825)">Unit Price</div>
<div class="c h" style="left:964.92px;top:43.2px;transform:scaleX(0.9546)">Discount</div>
<div class="c h" style="left:1031.86px;top:43.2px;transform:scaleX(0.8891)">Tax</div>
<div class="c h" style="left:1090.82px;top:43.2px;transform:scaleX(0.9604)">Shipping</div>
<div class="c h" style="left:1152.36px;top:43.2px;transform:scaleX(1.0132)">Net Amount</div>
<div class="c" style="left:47.8px;top:79.6px;letter-spacing:-1.233px">CCAC</div>
<div class="c" style="left:160.7px;top:79.6px;letter-spacing:0.668px">Mexico</div>
<div class="c" style="left:261.3px;top:79.6px;letter-spacing:0.433px">Mexico City</div>
<div class="c" style="left:360.3px;top:79.6px;letter-spacing:0.519px">Widget A</div>
<div class="c" style="left:445.5px;top:79.6px;letter-spacing:0.168px">Electronics</div>
<div class="c" style="left:533.0px;top:79.6px;letter-spacing:0.239px">John Smith</div>
<div class="c r n" style="left:525.8px;width:200px;top:79.6px;letter-spacing:0.48px">1/15/2024</div>
<div class="c r n" style="left:612.2px;width:200px;top:79.6px;letter-spacing:0.12px">$12,500.00</div>
<div class="c r n" style="left:691.4px;width:200px;top:79.6px;letter-spacing:0px">1,250</div>
<div class="c n" style="left:901.0px;top:79.6px">$</div>
<div class="c r n" style="left:753.6px;width:200px;top:79.6px">10</div>
<div class="c n" style="left:969.8px;top:79.6px">$</div>
<div class="c r n" style="left:822.8px;width:200px;top:79.6px">250</div>
<div class="c n" style="left:1035.9px;top:79.6px">$</div>
<div class="c r n" style="left:884.1px;width:200px;top:79.6px">1,250</div>
<div class="c n" style="left:1095.8px;top:79.6px">$</div>
<div class="c r n" style="left:944.1px;width:200px;top:79.6px">500</div>
<div class="c n" style="left:1156.9px;top:79.6px">$</div>
<div class="c r n" style="left:1036.2px;width:200px;top:79.6px">10,500</div>
<div class="c" style="left:47.3px;top:109.9px;letter-spacing:0.427px">North America</div>
<div class="c" style="left:160.8px;top:109.9px;letter-spacing:-0.465px">USA</div>
<div class="c" style="left:261.3px;top:109.9px;letter-spacing:0.385px">New York</div>
<div class="c" style="left:360.3px;top:109.9px;letter-spacing:0.432px">Widget B</div>
<div class="c" style="left:445.5px;top:109.9px;letter-spacing:0.497px">Furniture</div>
<div class="c" style="left:532.5px;top:109.9px;letter-spacing:-0.195px">Sarah Lee</div>
<div class="c r n" style="left:525.8px;width:200px;top:109.9px;letter-spacing:0.48px">1/16/2024</div>
<div class="c r n" style="left:612.2px;width:200px;top:109.9px;letter-spacing:0.12px">$8,900.00</div>
<div class="c r n" style="left:691.4px;width:200px;top:109.9px;letter-spacing:0px">890</div>
<div class="c n" style="left:901.0px;top:109.9px">$</div>
<div class="c r n" style="left:753.6px;width:200px;top:109.9px">10</div>
<div class="c n" style="left:969.8px;top:109.9px">$</div>
<div class="c r n" style="left:822.8px;width:200px;top:109.9px">178</div>
<div class="c n" style="left:1035.9px;top:109.9px">$</div>
<div class="c r n" style="left:880.0px;width:200px;top:109.9px">890</div>
<div class="c n" style="left:1095.8px;top:109.9px">$</div>
<div class="c r n" style="left:944.1px;width:200px;top:109.9px">356</div>
<div class="c n" style="left:1156.9px;top:109.9px">$</div>
<div class="c r n" style="left:1036.2px;width:200px;top:109.9px">7,476</div>
<div class="c" style="left:47.3px;top:140.2px;letter-spacing:0.352px">MENA</div>
<div class="c" style="left:160.8px;top:140.2px;letter-spacing:-0.695px">UAE</div>
<div class="c" style="left:261.3px;top:140.2px;letter-spacing:0.972px">Dubai</div>
<div class="c" style="left:360.3px;top:140.2px;letter-spacing:0.377px">Widget C</div>
<div class="c" style="left:445.5px;top:140.2px;letter-spacing:0.168px">Electronics</div>
<div class="c" style="left:533.2px;top:140.2px;letter-spacing:0.130px">Ahmed Hassan</div>
<div class="c r n" style="left:525.8px;width:200px;top:140.2px;letter-spacing:0.48px">1/17/2024</div>
<div class="c r n" style="left:612.2px;width:200px;top:140.2px;letter-spacing:0.12px">$15,400.00</div>
<div class="c r n" style="left:691.4px;width:200px;top:140.2px;letter-spacing:0px">1,540</div>
<div class="c n" style="left:901.0px;top:140.2px">$</div>
<div class="c r n" style="left:753.6px;width:200px;top:140.2px">10</div>
<div class="c n" style="left:969.8px;top:140.2px">$</div>
<div class="c r n" style="left:822.8px;width:200px;top:140.2px">308</div>
<div class="c n" style="left:1035.9px;top:140.2px">$</div>
<div class="c r n" style="left:884.1px;width:200px;top:140.2px">1,540</div>
<div class="c n" style="left:1095.8px;top:140.2px">$</div>
<div class="c r n" style="left:944.1px;width:200px;top:140.2px">616</div>
<div class="c n" style="left:1156.9px;top:140.2px">$</div>
<div class="c r n" style="left:1036.2px;width:200px;top:140.2px">12,936</div>
<div class="c" style="left:47.3px;top:170.6px;letter-spacing:0.298px">Europe</div>
<div class="c" style="left:161.2px;top:170.6px;letter-spacing:0.181px">Germany</div>
<div class="c" style="left:261.3px;top:170.6px;letter-spacing:0.445px">Berlin</div>
<div class="c" style="left:360.3px;top:170.6px;letter-spacing:0.519px">Widget A</div>
<div class="c" style="left:445.5px;top:170.6px;letter-spacing:0.168px">Electronics</div>
<div class="c" style="left:531.9px;top:170.6px;letter-spacing:0.478px">Maria Schmidt</div>
<div class="c r n" style="left:525.8px;width:200px;top:170.6px;letter-spacing:0.48px">1/18/2024</div>
<div class="c r n" style="left:612.2px;width:200px;top:170.6px;letter-spacing:0.12px">$7,600.00</div>
<div class="c r n" style="left:691.4px;width:200px;top:170.6px;letter-spacing:0px">760</div>
<div class="c n" style="left:901.0px;top:170.6px">$</div>
<div class="c r n" style="left:753.6px;width:200px;top:170.6px">10</div>
<div class="c n" style="left:969.8px;top:170.6px">$</div>
<div class="c r n" style="left:822.8px;width:200px;top:170.6px">152</div>
<div class="c n" style="left:1035.9px;top:170.6px">$</div>
<div class="c r n" style="left:880.0px;width:200px;top:170.6px">760</div>
<div class="c n" style="left:1095.8px;top:170.6px">$</div>
<div class="c r n" style="left:944.1px;width:200px;top:170.6px">304</div>
<div class="c n" style="left:1156.9px;top:170.6px">$</div>
<div class="c r n" style="left:1036.2px;width:200px;top:170.6px">6,384</div>
<div class="c" style="left:47.8px;top:200.9px;letter-spacing:-1.233px">CCAC</div>
<div class="c" style="left:161.2px;top:200.9px;letter-spacing:-0.163px">Costa Rica</div>
<div class="c" style="left:261.9px;top:200.9px;letter-spacing:-0.402px">San José</div>
<div class="c" style="left:360.3px;top:200.9px;letter-spacing:0.432px">Widget B</div>
<div class="c" style="left:445.5px;top:200.9px;letter-spacing:0.497px">Furniture</div>
<div class="c" style="left:532.4px;top:200.9px;letter-spacing:0.225px">Carlos Mendez</div>
<div class="c r n" style="left:525.8px;width:200px;top:200.9px;letter-spacing:0.48px">1/19/2024</div>
<div class="c r n" style="left:612.2px;width:200px;top:200.9px;letter-spacing:0.12px">$11,300.00</div>
<div class="c r n" style="left:691.4px;width:200px;top:200.9px;letter-spacing:0px">1,130</div>
<div class="c n" style="left:901.0px;top:200.9px">$</div>
<div class="c r n" style="left:753.6px;width:200px;top:200.9px">10</div>
<div class="c n" style="left:969.8px;top:200.9px">$</div>
<div class="c r n" style="left:822.8px;width:200px;top:200.9px">226</div>
<div class="c n" style="left:1035.9px;top:200.9px">$</div>
<div class="c r n" style="left:884.1px;width:200px;top:200.9px">1,130</div>
<div class="c n" style="left:1095.8px;top:200.9px">$</div>
<div class="c r n" style="left:944.1px;width:200px;top:200.9px">452</div>
<div class="c n" style="left:1156.9px;top:200.9px">$</div>
<div class="c r n" style="left:1036.2px;width:200px;top:200.9px">9,492</div>
<div class="c" style="left:48.6px;top:231.2px;letter-spacing:-0.178px">Asia Pacific</div>
<div class="c" style="left:161.8px;top:231.2px;letter-spacing:-0.183px">Japan</div>
<div class="c" style="left:262.2px;top:231.2px;letter-spacing:0.468px">Tokyo</div>
<div class="c" style="left:360.3px;top:231.2px;letter-spacing:0.377px">Widget C</div>
<div class="c" style="left:445.5px;top:231.2px;letter-spacing:0.168px">Electronics</div>
<div class="c" style="left:532.9px;top:231.2px;letter-spacing:-0.055px">Yuki Tanaka</div>
<div class="c r n" style="left:525.8px;width:200px;top:231.2px;letter-spacing:0.48px">1/20/2024</div>
<div class="c r n" style="left:612.2px;width:200px;top:231.2px;letter-spacing:0.12px">$9,800.00</div>
<div class="c r n" style="left:691.4px;width:200px;top:231.2px;letter-spacing:0px">980</div>
<div class="c n" style="left:901.0px;top:231.2px">$</div>
<div class="c r n" style="left:753.6px;width:200px;top:231.2px">10</div>
<div class="c n" style="left:969.8px;top:231.2px">$</div>
<div class="c r n" style="left:822.8px;width:200px;top:231.2px">196</div>
<div class="c n" style="left:1035.9px;top:231.2px">$</div>
<div class="c r n" style="left:880.0px;width:200px;top:231.2px">980</div>
<div class="c n" style="left:1095.8px;top:231.2px">$</div>
<div class="c r n" style="left:944.1px;width:200px;top:231.2px">392</div>
<div class="c n" style="left:1156.9px;top:231.2px">$</div>
<div class="c r n" style="left:1036.2px;width:200px;top:231.2px">8,232</div>
<div class="c" style="left:47.3px;top:261.5px;letter-spacing:0.352px">MENA</div>
<div class="c" style="left:161.3px;top:261.5px;letter-spacing:0.092px">Saudi Arabia</div>
<div class="c" style="left:261.3px;top:261.5px;letter-spacing:0.431px">Riyadh</div>
<div class="c" style="left:360.3px;top:261.5px;letter-spacing:0.519px">Widget A</div>
<div class="c" style="left:445.5px;top:261.5px;letter-spacing:0.168px">Electronics</div>
<div class="c" style="left:531.9px;top:261.5px;letter-spacing:0.210px">Khalid Al-Farsi</div>
<div class="c r n" style="left:525.8px;width:200px;top:261.5px;letter-spacing:0.48px">1/21/2024</div>
<div class="c r n" style="left:612.2px;width:200px;top:261.5px;letter-spacing:0.12px">$13,200.00</div>
<div class="c r n" style="left:691.4px;width:200px;top:261.5px;letter-spacing:0px">1,320</div>
<div class="c n" style="left:901.0px;top:261.5px">$</div>
<div class="c r n" style="left:753.6px;width:200px;top:261.5px">10</div>
<div class="c n" style="left:969.8px;top:261.5px">$</div>
<div class="c r n" style="left:822.8px;width:200px;top:261.5px">264</div>
<div class="c n" style="left:1035.9px;top:261.5px">$</div>
<div class="c r n" style="left:884.1px;width:200px;top:261.5px">1,320</div>
<div class="c n" style="left:1095.8px;top:261.5px">$</div>
<div class="c r n" style="left:944.1px;width:200px;top:261.5px">528</div>
<div class="c n" style="left:1156.9px;top:261.5px">$</div>
<div class="c r n" style="left:1036.2px;width:200px;top:261.5px">11,088</div>
<div class="c" style="left:47.3px;top:291.9px;letter-spacing:0.298px">Europe</div>
<div class="c" style="left:160.7px;top:291.9px;letter-spacing:0.068px">France</div>
<div class="c" style="left:261.3px;top:291.9px;letter-spacing:-0.171px">Paris</div>
<div class="c" style="left:360.3px;top:291.9px;letter-spacing:0.432px">Widget B</div>
<div class="c" style="left:445.5px;top:291.9px;letter-spacing:0.497px">Furniture</div>
<div class="c" style="left:531.9px;top:291.9px;letter-spacing:0.365px">Pierre Dubois</div>
<div class="c r n" style="left:525.8px;width:200px;top:291.9px;letter-spacing:0.48px">1/22/2024</div>
<div class="c r n" style="left:612.2px;width:200px;top:291.9px;letter-spacing:0.12px">$10,500.00</div>
<div class="c r n" style="left:691.4px;width:200px;top:291.9px;letter-spacing:0px">1,050</div>
<div class="c n" style="left:901.0px;top:291.9px">$</div>
<div class="c r n" style="left:753.6px;width:200px;top:291.9px">10</div>
<div class="c n" style="left:969.8px;top:291.9px">$</div>
<div class="c r n" style="left:822.8px;width:200px;top:291.9px">210</div>
<div class="c n" style="left:1035.9px;top:291.9px">$</div>
<div class="c r n" style="left:884.1px;width:200px;top:291.9px">1,050</div>
<div class="c n" style="left:1095.8px;top:291.9px">$</div>
<div class="c r n" style="left:944.1px;width:200px;top:291.9px">420</div>
<div class="c n" style="left:1156.9px;top:291.9px">$</div>
<div class="c r n" style="left:1036.2px;width:200px;top:291.9px">8,820</div>
<div class="c" style="left:47.8px;top:322.2px;letter-spacing:-1.233px">CCAC</div>
<div class="c" style="left:160.7px;top:322.2px;letter-spacing:-0.120px">Panama</div>
<div class="c" style="left:261.3px;top:322.2px;letter-spacing:0.024px">Panama City</div>
<div class="c" style="left:360.3px;top:322.2px;letter-spacing:0.377px">Widget C</div>
<div class="c" style="left:445.5px;top:322.2px;letter-spacing:0.168px">Electronics</div>
<div class="c" style="left:531.9px;top:322.2px;letter-spacing:-0.119px">Luis Garcia</div>
<div class="c r n" style="left:525.8px;width:200px;top:322.2px;letter-spacing:0.48px">1/23/2024</div>
<div class="c r n" style="left:612.2px;width:200px;top:322.2px;letter-spacing:0.12px">$6,700.00</div>
<div class="c r n" style="left:691.4px;width:200px;top:322.2px;letter-spacing:0px">670</div>
<div class="c n" style="left:901.0px;top:322.2px">$</div>
<div class="c r n" style="left:753.6px;width:200px;top:322.2px">10</div>
<div class="c n" style="left:969.8px;top:322.2px">$</div>
<div class="c r n" style="left:822.8px;width:200px;top:322.2px">134</div>
<div class="c n" style="left:1035.9px;top:322.2px">$</div>
<div class="c r n" style="left:880.0px;width:200px;top:322.2px">670</div>
<div class="c n" style="left:1095.8px;top:322.2px">$</div>
<div class="c r n" style="left:944.1px;width:200px;top:322.2px">268</div>
<div class="c n" style="left:1156.9px;top:322.2px">$</div>
<div class="c r n" style="left:1036.2px;width:200px;top:322.2px">5,628</div>
<div class="c" style="left:47.3px;top:352.5px;letter-spacing:0.427px">North America</div>
<div class="c" style="left:161.2px;top:352.5px;letter-spacing:-0.166px">Canada</div>
<div class="c" style="left:262.2px;top:352.5px;letter-spacing:0.749px">Toronto</div>
<div class="c" style="left:360.3px;top:352.5px;letter-spacing:0.519px">Widget A</div>
<div class="c" style="left:445.5px;top:352.5px;letter-spacing:0.168px">Electronics</div>
<div class="c" style="left:531.9px;top:352.5px;letter-spacing:0.163px">Emily Chen</div>
<div class="c r n" style="left:525.8px;width:200px;top:352.5px;letter-spacing:0.48px">1/24/2024</div>
<div class="c r n" style="left:612.2px;width:200px;top:352.5px;letter-spacing:0.12px">$8,300.00</div>
<div class="c r n" style="left:691.4px;width:200px;top:352.5px;letter-spacing:0px">830</div>
<div class="c n" style="left:901.0px;top:352.5px">$</div>
<div class="c r n" style="left:753.6px;width:200px;top:352.5px">10</div>
<div class="c n" style="left:969.8px;top:352.5px">$</div>
<div class="c r n" style="left:822.8px;width:200px;top:352.5px">166</div>
<div class="c n" style="left:1035.9px;top:352.5px">$</div>
<div class="c r n" style="left:880.0px;width:200px;top:352.5px">830</div>
<div class="c n" style="left:1095.8px;top:352.5px">$</div>
<div class="c r n" style="left:944.1px;width:200px;top:352.5px">332</div>
<div class="c n" style="left:1156.9px;top:352.5px">$</div>
<div class="c r n" style="left:1036.2px;width:200px;top:352.5px">6,972</div>
<div class="c" style="left:47.3px;top:382.9px;letter-spacing:0.352px">MENA</div>
<div class="c" style="left:160.7px;top:382.9px;letter-spacing:0.430px">Egypt</div>
<div class="c" style="left:261.8px;top:382.9px;letter-spacing:0.296px">Cairo</div>
<div class="c" style="left:360.3px;top:382.9px;letter-spacing:0.432px">Widget B</div>
<div class="c" style="left:445.5px;top:382.9px;letter-spacing:0.497px">Furniture</div>
<div class="c" style="left:532.5px;top:382.9px;letter-spacing:0.129px">Omar Nassar</div>
<div class="c r n" style="left:525.8px;width:200px;top:382.9px;letter-spacing:0.48px">1/25/2024</div>
<div class="c r n" style="left:612.2px;width:200px;top:382.9px;letter-spacing:0.12px">$14,100.00</div>
<div class="c r n" style="left:691.4px;width:200px;top:382.9px;letter-spacing:0px">1,410</div>
<div class="c n" style="left:901.0px;top:382.9px">$</div>
<div class="c r n" style="left:753.6px;width:200px;top:382.9px">10</div>
<div class="c n" style="left:969.8px;top:382.9px">$</div>
<div class="c r n" style="left:822.8px;width:200px;top:382.9px">282</div>
<div class="c n" style="left:1035.9px;top:382.9px">$</div>
<div class="c r n" style="left:884.1px;width:200px;top:382.9px">1,410</div>
<div class="c n" style="left:1095.8px;top:382.9px">$</div>
<div class="c r n" style="left:944.1px;width:200px;top:382.9px">564</div>
<div class="c n" style="left:1156.9px;top:382.9px">$</div>
<div class="c r n" style="left:1036.2px;width:200px;top:382.9px">11,844</div>
<div class="c" style="left:48.6px;top:413.2px;letter-spacing:-0.178px">Asia Pacific</div>
<div class="c" style="left:162.0px;top:413.2px;letter-spacing:0.108px">Australia</div>
<div class="c" style="left:261.9px;top:413.2px;letter-spacing:-0.015px">Sydney</div>
<div class="c" style="left:360.3px;top:413.2px;letter-spacing:0.377px">Widget C</div>
<div class="c" style="left:445.5px;top:413.2px;letter-spacing:0.168px">Electronics</div>
<div class="c" style="left:533.0px;top:413.2px;letter-spacing:0.110px">James Wilson</div>
<div class="c r n" style="left:525.8px;width:200px;top:413.2px;letter-spacing:0.48px">1/26/2024</div>
<div class="c r n" style="left:612.2px;width:200px;top:413.2px;letter-spacing:0.12px">$7,500.00</div>
<div class="c r n" style="left:691.4px;width:200px;top:413.2px;letter-spacing:0px">750</div>
<div class="c n" style="left:901.0px;top:413.2px">$</div>
<div class="c r n" style="left:753.6px;width:200px;top:413.2px">10</div>
<div class="c n" style="left:969.8px;top:413.2px">$</div>
<div class="c r n" style="left:822.8px;width:200px;top:413.2px">150</div>
<div class="c n" style="left:1035.9px;top:413.2px">$</div>
<div class="c r n" style="left:880.0px;width:200px;top:413.2px">750</div>
<div class="c n" style="left:1095.8px;top:413.2px">$</div>
<div class="c r n" style="left:944.1px;width:200px;top:413.2px">300</div>
<div class="c n" style="left:1156.9px;top:413.2px">$</div>
<div class="c r n" style="left:1036.2px;width:200px;top:413.2px">6,300</div>
</div>
</body></html>
